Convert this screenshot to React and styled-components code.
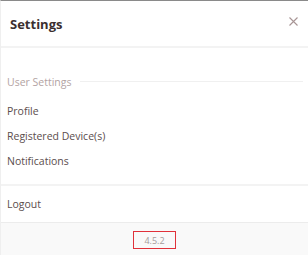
import styled, { createGlobalStyle } from 'styled-components';

const GlobalStyle = createGlobalStyle`
  html, body {
    margin: 0;
    padding: 0;
    background: #ffffff;
  }
  body {
    font-family: "Open Sans", "Noto Sans", sans-serif;
  }
`;

const Panel = styled.div`
  width: 308px;
  height: 255px;
  box-sizing: border-box;
  border-top: 1px solid #8a8a8a;
  border-left: 1px solid #efefef;
  display: flex;
  flex-direction: column;
  overflow: hidden;
`;

const Header = styled.div`
  height: 45px;
  flex-shrink: 0;
  display: flex;
  align-items: center;
  justify-content: space-between;
  padding: 0 10px 0 9px;
  border-bottom: 2px solid #f3f3f3;
`;

const Title = styled.h1`
  margin: 0;
  font-size: 13px;
  font-weight: 700;
  color: #3b2f2f;
`;

const CloseButton = styled.button`
  border: none;
  background: none;
  padding: 0;
  margin-bottom: 4px;
  width: 10px;
  height: 10px;
  display: flex;
  align-items: center;
  justify-content: center;
  cursor: pointer;
`;

const Body = styled.div`
  padding: 24px 5px 0 6px;
  display: flex;
  flex-direction: column;
`;

const SectionLabel = styled.div`
  display: flex;
  align-items: center;
  gap: 8px;
  font-size: 10.5px;
  color: #b3a3a3;
  height: 20px;

  &::after {
    content: '';
    flex: 1;
    height: 1px;
    margin-top: -1px;
    background: #f0f0f0;
  }
`;

const Item = styled.div`
  font-size: 10.5px;
  color: #5b4d4d;
  height: 25px;
  display: flex;
  align-items: center;
  cursor: pointer;
`;

const List = styled.div`
  display: flex;
  flex-direction: column;
  padding: 6px 0 11px 0;
`;

const Divider = styled.div`
  height: 2px;
  flex-shrink: 0;
  background: #f3f3f3;
`;

const LogoutRow = styled(Item)`
  padding: 0 6px;
  height: 36px;
  flex-shrink: 0;
`;

const Footer = styled.div`
  flex: 1;
  background: #f9f9f9;
  border-top: 1px solid #ececec;
  display: flex;
  justify-content: center;
  align-items: flex-start;
  padding-top: 8px;
`;

const Version = styled.div`
  width: 43px;
  height: 18px;
  box-sizing: border-box;
  border: 1.5px solid #e0313a;
  font-size: 9px;
  color: #a59b9b;
  display: flex;
  align-items: center;
  justify-content: center;
`;

export default function App() {
  return (
    <>
      <GlobalStyle />
      <Panel>
        <Header>
          <Title>Settings</Title>
          <CloseButton aria-label="Close">
            <svg width="9" height="9" viewBox="0 0 9 9">
              <path d="M0.5 0.5 L8.5 8.5 M8.5 0.5 L0.5 8.5" stroke="#a89595" strokeWidth="1.1" />
            </svg>
          </CloseButton>
        </Header>
        <Body>
          <SectionLabel>User Settings</SectionLabel>
          <List>
            <Item>Profile</Item>
            <Item>Registered Device(s)</Item>
            <Item>Notifications</Item>
          </List>
        </Body>
        <Divider />
        <LogoutRow>Logout</LogoutRow>
        <Footer>
          <Version>4.5.2</Version>
        </Footer>
      </Panel>
    </>
  );
}
